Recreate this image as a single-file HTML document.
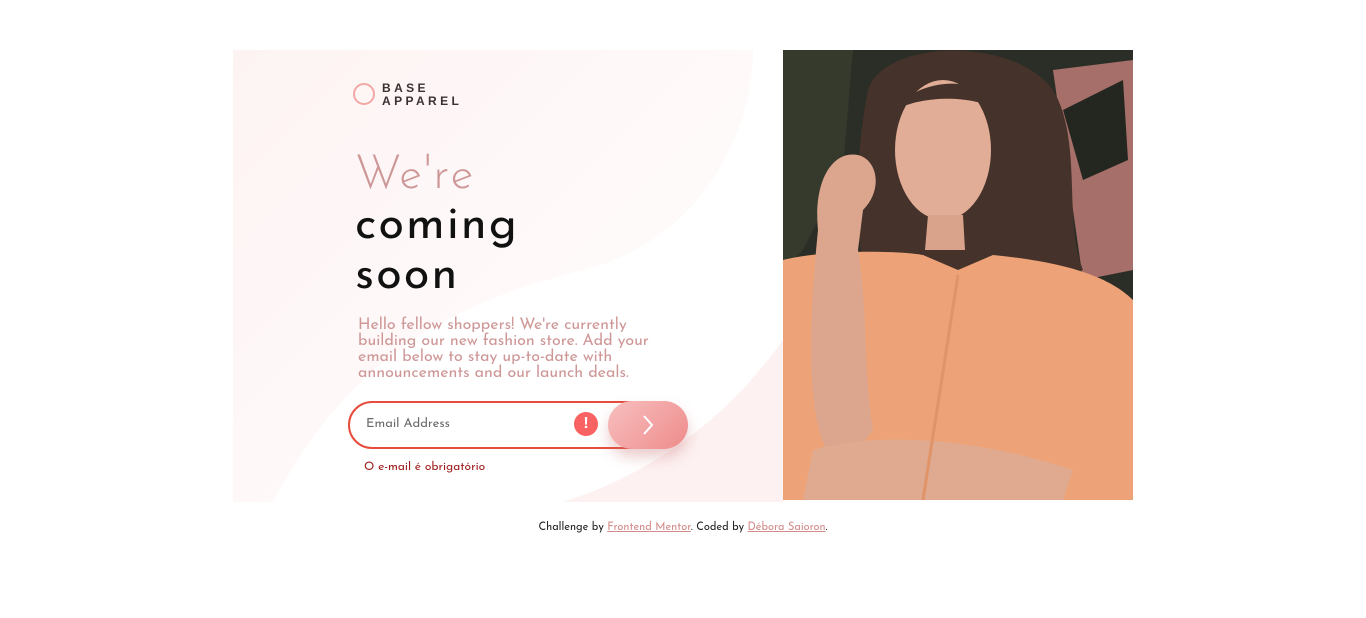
<!DOCTYPE html>
<html><head><meta charset="utf-8"><style>
*{margin:0;padding:0;box-sizing:border-box}
body{width:1366px;height:618px;background:#fff;font-family:"Josefin Sans","Liberation Sans",sans-serif;position:relative;overflow:hidden}
.left{position:absolute;left:233px;top:50px;width:550px;height:452px;background:linear-gradient(135deg,#fdf3f3,#fffafa 60%,#fff);overflow:hidden}
.photo{position:absolute;left:783px;top:50px;width:350px;height:450px}
.logo{position:absolute;left:120px;top:32px}
.logo .c{position:absolute;left:0;top:1px;width:22px;height:22px;border:2px solid #f2a8a5;border-radius:50%}
.logo .t{position:absolute;left:29px;top:0;font:bold 12px/13px "Liberation Sans",sans-serif;letter-spacing:3.4px;color:#3a3232}
h1{position:absolute;left:122px;top:102px;font-weight:normal;font-size:47px;line-height:50px;letter-spacing:2px}
h1 .a{color:#ce9797;font-weight:300}
h1 .b{color:#111}
p.d{position:absolute;left:125px;top:267px;width:330px;font-size:16px;line-height:16px;color:#ce9797}
.inp{position:absolute;left:115px;top:351px;width:330px;height:48px;border:2px solid #e74c3c;border-radius:24px;background:#fff}
.inp span{position:absolute;left:16px;top:15px;font-size:13px;color:#6b6b6b}
.err{position:absolute;left:224px;top:9px;width:24px;height:24px;border-radius:50%;background:#f96262;color:#fff;font:bold 16px/24px "Liberation Sans";text-align:center}
.btn{position:absolute;left:375px;top:351px;width:80px;height:48px;border-radius:24px;background:linear-gradient(135deg,#f8bfbf,#ee8b8b);box-shadow:0 8px 14px rgba(198,110,110,.35)}
.msg{position:absolute;left:131px;top:411px;font-size:12px;color:#9e1b1b}
.foot{position:absolute;top:522px;left:0;width:100%;text-align:center;font-size:11px;color:#222}
.foot a{color:#d48b8b;text-decoration:underline}
</style></head><body>
<div class="left">
<svg width="550" height="452" style="position:absolute;left:0;top:0"><path d="M40 452 C120 300 230 250 350 220 C470 190 520 80 520 0 L550 0 L550 452 Z" fill="#fff"/><path d="M330 452 C430 420 500 360 550 290 L550 452Z" fill="#fdf1f1"/></svg>
<div class="logo"><div class="c"></div><div class="t">BASE<br>APPAREL</div></div>
<h1><span class="a">We're</span><br><span class="b">coming<br>soon</span></h1>
<p class="d">Hello fellow shoppers! We're currently building our new fashion store. Add your email below to stay up-to-date with announcements and our launch deals.</p>
<div class="inp"><span>Email Address</span><div class="err">!</div></div>
<div class="btn"><svg width="80" height="48"><path d="M36 15 L44 24 L36 33" stroke="#fff" stroke-width="2" fill="none"/></svg></div>
<div class="msg">O e-mail é obrigatório</div>
</div>
<svg class="photo" viewBox="0 0 350 450">
<rect width="350" height="450" fill="#2a2e26"/>
<path d="M270 20 L350 10 L350 220 L300 230 Z" fill="#a66f69"/>
<path d="M0 0 L70 0 L60 120 L20 200 L0 220Z" fill="#353a2d"/>
<path d="M280 60 L340 30 L345 110 L300 130Z" fill="#23271f"/>
<path d="M85 40 C100 -10 230 -15 270 40 C300 90 280 170 300 220 L240 230 L80 215 C70 160 75 90 85 40Z" fill="#45322a"/>
<ellipse cx="160" cy="100" rx="48" ry="70" fill="#e2ad96"/>
<path d="M112 60 C130 30 200 20 215 60 C190 45 140 45 112 60Z" fill="#45322a"/>
<path d="M145 165 L180 165 L182 200 L142 200Z" fill="#d9a38b"/>
<path d="M0 210 C40 200 110 200 140 205 L175 220 L210 205 C260 210 320 220 350 250 L350 450 L0 450Z" fill="#eda377"/>
<path d="M35 180 C30 130 50 100 75 105 C95 110 100 140 80 160 L75 200 C85 260 80 320 90 380 L60 420 C30 400 20 330 35 180Z" fill="#dca68e"/>
<path d="M30 400 C100 380 200 390 290 420 L280 450 L20 450Z" fill="#e0aa91"/>
<path d="M175 225 L140 450" stroke="#e09468" stroke-width="3"/>
</svg>
<div class="foot">Challenge by <a>Frontend Mentor</a>. Coded by <a>Débora Saioron</a>.</div>
</body></html>
